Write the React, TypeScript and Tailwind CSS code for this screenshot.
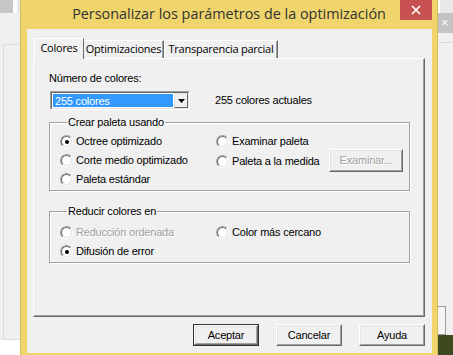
import type { ReactNode } from 'react';

const sans = { fontFamily: '"Liberation Sans", Arial, sans-serif' };
const ui = { fontFamily: '"Open Sans", "Noto Sans", sans-serif' };

function Radio({ checked = false, disabled = false, label }: { checked?: boolean; disabled?: boolean; label: string }) {
  return (
    <div className="flex items-center h-[19px]">
      <div className="w-[13px] h-[13px] rounded-full border border-t-[#a0a0a0] border-l-[#a0a0a0] border-r-white border-b-white flex items-center justify-center">
        <div className="w-[11px] h-[11px] rounded-full border border-t-[#696969] border-l-[#696969] border-r-[#e3e3e3] border-b-[#e3e3e3] bg-white flex items-center justify-center">
          {checked && <div className="w-[4px] h-[4px] rounded-full bg-black" />}
        </div>
      </div>
      <span
        className={`ml-[3px] text-[11px] tracking-[-0.2px] ${
          disabled ? 'text-[#a0a0a0] [text-shadow:1px_1px_0_#fff]' : 'text-black'
        }`}
      >
        {label}
      </span>
    </div>
  );
}

function Group({ title, className, children }: { title: string; className: string; children: ReactNode }) {
  return (
    <fieldset className={`border border-[#a0a0a0] shadow-[inset_1px_1px_0_#fff,1px_1px_0_#fff] ${className}`}>
      <legend className="ml-[7px] px-[1px] text-[11px] tracking-[-0.2px] text-black leading-[13px]">{title}</legend>
      {children}
    </fieldset>
  );
}

function Button({
  label,
  isDefault = false,
  disabled = false,
  className = '',
}: {
  label: string;
  isDefault?: boolean;
  disabled?: boolean;
  className?: string;
}) {
  return (
    <div className={`${isDefault ? 'border border-[#333]' : ''} ${className}`}>
      <div className="h-full border border-t-white border-l-white border-r-[#696969] border-b-[#696969]">
        <div className="h-full flex items-center justify-center border border-t-[#e3e3e3] border-l-[#e3e3e3] border-r-[#a0a0a0] border-b-[#a0a0a0] bg-[#f0f0f0]">
          <span
            className={`text-[11px] tracking-[-0.2px] ${
              disabled ? 'text-[#a0a0a0] [text-shadow:1px_1px_0_#fff]' : 'text-black'
            }`}
          >
            {label}
          </span>
        </div>
      </div>
    </div>
  );
}

function Tab({ label, width, active = false }: { label: string; width: string; active?: boolean }) {
  return (
    <div
      className={`relative border-t border-l border-t-white border-l-white border-r border-r-[#696969] text-[11px] tracking-[-0.25px] text-black flex items-center justify-center whitespace-nowrap ${width} ${
        active ? 'h-[21px] -mb-px z-10 bg-[#f0f0f0] -mr-px pb-[2px]' : 'h-[18px] shadow-[inset_-1px_0_0_#a0a0a0]'
      }`}
      style={ui}
    >
      {label}
    </div>
  );
}

export default function App() {
  return (
    <div className="relative w-[453px] h-[355px] overflow-hidden bg-[#f0f0f0]" style={sans}>
      {/* ventanas detrás */}
      <div className="absolute left-0 top-0 w-[20px] h-[355px] flex flex-col">
        <div className="flex h-[13px]">
          <div className="w-[13px] bg-[#c6c6c6]" />
          <div className="w-[4px] bg-white" />
          <div className="flex-1 bg-[#e6e6e6]" />
        </div>
        <div className="ml-[3px] mt-[31px] h-[296px] border-l border-t border-b border-[#dcdcdc] bg-[#f0f0f0]" />
        <div className="flex-1 bg-white" />
      </div>
      <div className="absolute left-[438px] top-0 w-[15px] h-[355px] flex flex-col">
        <div className="h-[13px] bg-[#e8e8e8] border-l-2 border-white" />
        <div className="h-[20px] bg-[#c3c3c3] text-white text-[13px] leading-[20px] pl-[3px]">×</div>
        <div className="h-[10px] border-b border-[#dadada]" />
        <div className="mt-[263px] h-[29px] w-[8px] border border-[#9a9a9a] border-l-0 bg-[#f4f4f4]" />
        <div className="flex-1 bg-[#3d4a20]" />
      </div>

      {/* diálogo */}
      <div className="absolute left-[20px] top-0 w-[418px] h-[356px] bg-[#efd56b] border-x border-[#d6bd56] flex flex-col">
        <div className="relative h-[29px] flex items-center justify-center">
          <span className="text-[14.4px] text-[#333] pb-[2px]" style={ui}>
            Personalizar los parámetros de la optimización
          </span>
          <div className="absolute right-[5px] top-0 w-[32px] h-[20px] bg-[#c75050] flex items-center justify-center">
            <svg width="10" height="10" viewBox="0 0 10 10">
              <path d="M1 1 L9 9 M9 1 L1 9" stroke="#fff" strokeWidth="1.6" />
            </svg>
          </div>
        </div>

        <div className="ml-[6px] mr-[5px] h-[324px] bg-[#f0f0f0] flex flex-col">
          <div className="ml-[6px] mt-[8px] mr-[7px]">
            <div className="flex items-end ml-[1px] h-[21px]">
              <Tab label="Colores" width="w-[50px]" active />
              <Tab label="Optimizaciones" width="w-[81px]" />
              <Tab label="Transparencia parcial" width="w-[114px]" />
            </div>
            <div className="h-[259px] border border-t-white border-l-white border-r-[#696969] border-b-[#696969] shadow-[inset_-1px_-1px_0_#a0a0a0] pl-[15px] pr-[14px] pt-[12px]">
              <div className="text-[11px] tracking-[-0.2px] text-black h-[14px] leading-[14px]">Número de colores:</div>
              <div className="mt-[6px] flex items-center">
                <div className="ml-[1px] w-[140px] h-[19px] border border-t-[#a0a0a0] border-l-[#a0a0a0] border-r-white border-b-white">
                  <div className="h-full flex border border-t-[#696969] border-l-[#696969] border-r-[#e3e3e3] border-b-[#e3e3e3] bg-white">
                    <div className="flex-1 m-px bg-[#3399ff] text-white text-[11px] tracking-[-0.2px] leading-[14px] pl-[2px]">
                      255 colores
                    </div>
                    <div className="w-[14px] border border-t-[#e3e3e3] border-l-[#e3e3e3] border-r-[#696969] border-b-[#696969] bg-[#f0f0f0] flex items-center justify-center">
                      <svg width="7" height="4" viewBox="0 0 7 4">
                        <path d="M0 0 H7 L3.5 4 Z" fill="#000" />
                      </svg>
                    </div>
                  </div>
                </div>
                <span className="ml-[25px] text-[11px] tracking-[-0.2px] text-black">255 colores actuales</span>
              </div>

              <Group title="Crear paleta usando" className="mt-[6px] h-[75px] pl-[10px] pt-[3px]">
                <div className="flex">
                  <div className="w-[156px]">
                    <Radio label="Octree optimizado" checked />
                    <Radio label="Corte medio optimizado" />
                    <Radio label="Paleta estándar" />
                  </div>
                  <div>
                    <Radio label="Examinar paleta" />
                    <div className="flex items-center">
                      <div className="w-[113px]">
                        <Radio label="Paleta a la medida" />
                      </div>
                      <Button label="Examinar..." disabled className="mt-[-2px] w-[74px] h-[23px]" />
                    </div>
                  </div>
                </div>
              </Group>

              <Group title="Reducir colores en" className="mt-[14px] h-[58px] pl-[10px] pt-[5px]">
                <div className="flex">
                  <div className="w-[156px]">
                    <Radio label="Reducción ordenada" disabled />
                    <Radio label="Difusión de error" checked />
                  </div>
                  <Radio label="Color más cercano" />
                </div>
              </Group>
            </div>
          </div>

          <div className="mt-[7px] mr-[7px] flex justify-end gap-[17px]">
            <Button label="Aceptar" isDefault className="w-[66px] h-[22px]" />
            <Button label="Cancelar" className="w-[66px] h-[22px]" />
            <Button label="Ayuda" className="w-[66px] h-[22px]" />
          </div>
        </div>
      </div>
    </div>
  );
}
